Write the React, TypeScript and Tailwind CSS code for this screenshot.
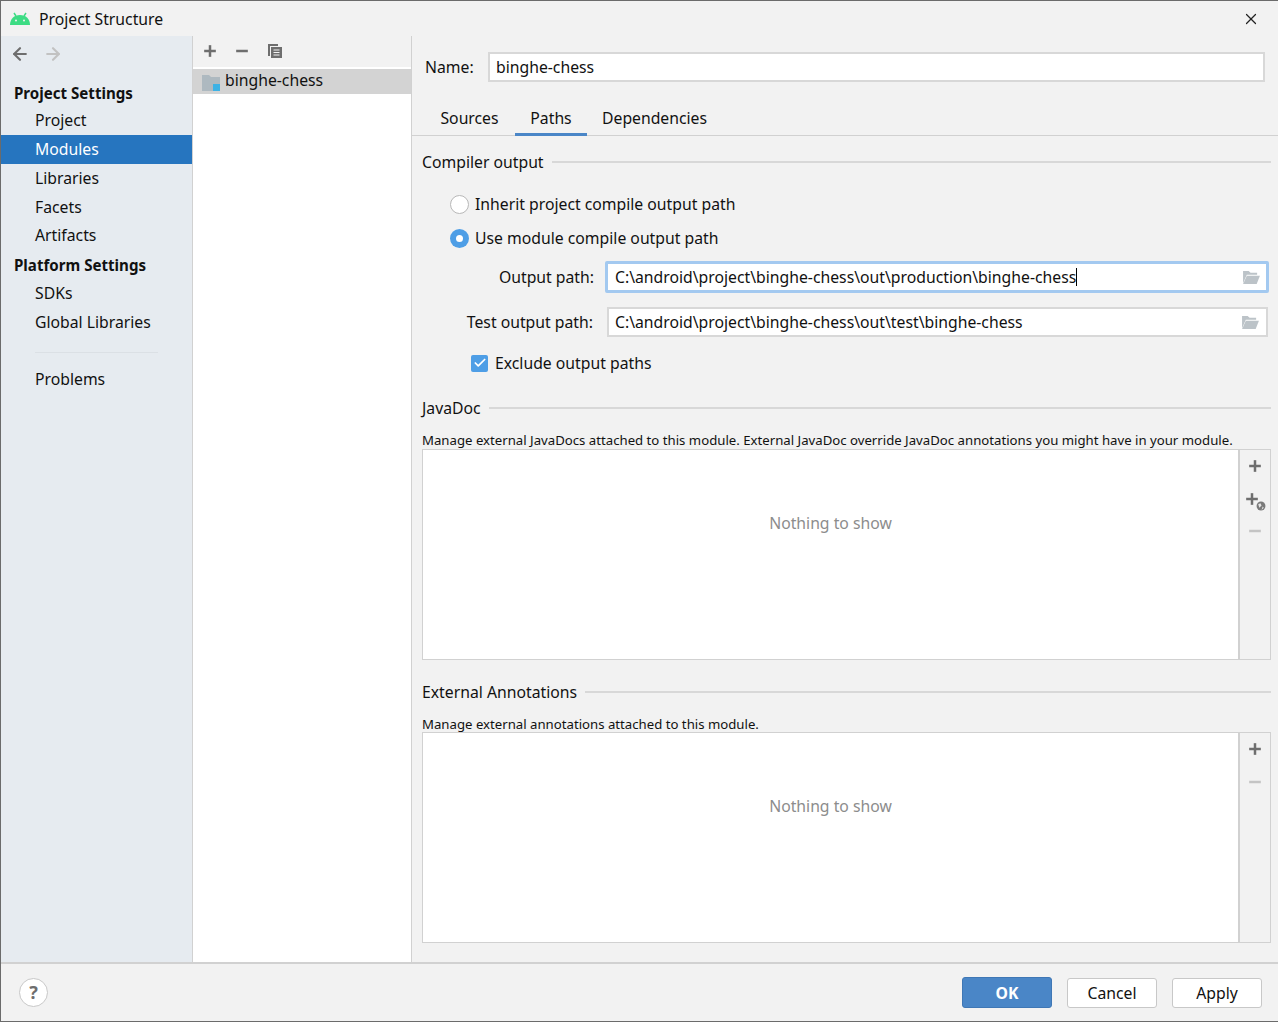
import { ArrowLeft, ArrowRight, Plus, Minus, X, Check } from "lucide-react";

const font = { fontFamily: '"Noto Sans", sans-serif' };

function FolderOpen() {
    return (
        <svg width="19" height="15" viewBox="0 0 20 16" className="shrink-0">
            <path d="M1 1h6l2 2h7v2H5L1 14z" fill="#bcc3c8" />
            <path d="M5 6h14l-3.500 9H1z" fill="#bcc3c8" />
        </svg>
    );
}

function SideItem({ label, active, bold, up }: { label: string; active?: boolean; bold?: boolean; up?: boolean }) {
    if (bold) {
        return <div className="h-[29px] pl-[13px] flex items-center font-bold text-[15.1px]">{label}</div>;
    }
    return (
        <div className={`h-[29px] pl-[34px] flex items-center ${active ? "bg-[#2675bf] text-white" : ""} ${up ? "pb-[2px]" : ""}`}>
            {label}
        </div>
    );
}

function SectionTitle({ label }: { label: string }) {
    return (
        <div className="flex items-center gap-2 h-[22px]">
            <span>{label}</span>
            <div className="flex-1 h-0.5 bg-[#d8d8d8]" />
        </div>
    );
}

function GlobeBadge() {
    return (
        <svg width="10" height="10" viewBox="0 0 9 9" className="absolute right-[-4px] bottom-[-2px]">
            <circle cx="4.500" cy="4.500" r="4" fill="#7a7a7a" />
            <path d="M2 3l2-1 1 2-2 2zM6 5l1 1-2 2z" fill="#e5e5e5" />
        </svg>
    );
}

function ListPanel({ withGlobe }: { withGlobe?: boolean }) {
    return (
        <div className="flex h-[211px] border border-[#d1d1d1]">
            <div className="flex-1 bg-white flex items-center justify-center">
                <span className="text-[#8c8c8c] mb-[62px]">Nothing to show</span>
            </div>
            <div className="w-[32px] border-l-2 border-[#d1d1d1] flex flex-col items-center pt-[6px] gap-[13px]">
                <Plus size={20} strokeWidth={3} strokeLinecap="butt" className="text-[#6e6e6e]" />
                {withGlobe && (
                    <div className="relative -translate-x-[3px] -mb-px">
                        <Plus size={20} strokeWidth={3} strokeLinecap="butt" className="text-[#6e6e6e]" />
                        <GlobeBadge />
                    </div>
                )}
                <Minus size={20} strokeWidth={3} strokeLinecap="butt" className="text-[#c4c4c4]" />
            </div>
        </div>
    );
}

export default function App() {
    return (
        <div className="w-[1278px] h-[1022px] flex flex-col overflow-hidden bg-[#f2f2f2] border border-[#6b6b6b] border-r-0 text-[15.75px] text-[#111]" style={font}>
            <div className="h-[35px] shrink-0 flex items-center pl-[9px] pr-[18px] leading-[23px]">
                <svg width="20" height="13" viewBox="0 0 20 13" className="mr-[9px]">
                    <path d="M0 13C0 7 4 3 10 3s10 4 10 10z" fill="#3ddc84" />
                    <path d="M4 1l2 3M16 1l-2 3" stroke="#3ddc84" strokeWidth="1.500" />
                    <circle cx="6" cy="8.500" r="1" fill="#f2f2f2" />
                    <circle cx="14" cy="8.500" r="1" fill="#f2f2f2" />
                </svg>
                <span className="pt-px">Project Structure</span>
                <X size={18} strokeWidth={1.6} className="ml-auto text-[#222]" />
            </div>

            <div className="flex-1 flex min-h-0">
                <div className="w-[192px] shrink-0 bg-[#e6ebf0] border-r border-[#d1d1d1]">
                    <div className="h-[43px] pl-[9px] pb-[8px] flex items-center gap-[13px]">
                        <ArrowLeft size={20} strokeWidth={2.6} className="text-[#6e6e6e]" />
                        <ArrowRight size={20} strokeWidth={2.6} className="text-[#c2c2c2]" />
                    </div>
                    <SideItem label="Project Settings" bold />
                    <div className="-mt-[2px]" />
                    <SideItem label="Project" />
                    <SideItem label="Modules" active />
                    <SideItem label="Libraries" />
                    <SideItem label="Facets" />
                    <SideItem label="Artifacts" up />
                    <SideItem label="Platform Settings" bold />
                    <SideItem label="SDKs" up />
                    <SideItem label="Global Libraries" up />
                    <div className="h-px bg-[#dbe0e5] mx-[34px] mt-[14px] mb-[13px]" />
                    <SideItem label="Problems" up />
                </div>

                <div className="w-[219px] shrink-0 bg-white border-r border-[#d1d1d1] flex flex-col">
                    <div className="h-[31px] bg-[#f2f2f2] flex items-center pl-[7px] gap-[12px] pb-[2px]">
                        <Plus size={20} strokeWidth={3} strokeLinecap="butt" className="text-[#6e6e6e]" />
                        <Minus size={20} strokeWidth={3} strokeLinecap="butt" className="text-[#6e6e6e]" />
                        <svg width="16" height="16" viewBox="0 0 16 16" className="ml-[3px]">
                            <path d="M1 1h10v2H3v10H1z" fill="#6e6e6e" />
                            <path d="M4 4h11v11H4z" fill="#6e6e6e" />
                            <path d="M6.500 7h6M6.500 9.500h6M6.500 12h6" stroke="#f2f2f2" />
                        </svg>
                    </div>
                    <div className="h-[2px]" />
                    <div className="h-[25px] bg-[#d3d3d3] flex items-center pl-[9px] gap-[5px] pb-[2px]">
                        <svg width="18" height="18" viewBox="0 0 18 18" className="mt-[2px]">
                            <path d="M0 2h7l2 2h9v14H0z" fill="#aeb9c0" />
                            <rect x="11" y="11" width="7" height="7" fill="#3db2e5" />
                        </svg>
                        <span>binghe-chess</span>
                    </div>
                </div>

                <div className="flex-1 min-w-0 flex flex-col leading-[23px]">
                    <div className="flex items-center pl-[13px] pr-[13px] pt-[16px]">
                        <span className="w-[63px]">Name:</span>
                        <div className="flex-1 h-[30px] bg-white border-2 border-[#d8d8d8] flex items-center pl-[6px]">binghe-chess</div>
                    </div>
                    <div className="flex mt-[21px] h-[33px] pl-[12px] border-b border-[#d1d1d1]">
                        <div className="w-[91px] flex items-center justify-center pb-[2px]">Sources</div>
                        <div className="w-[72px] h-[33px] flex items-center justify-center border-b-[3px] border-[#4a86c7]">Paths</div>
                        <div className="ml-[15px] flex items-center pb-[2px]">Dependencies</div>
                    </div>

                    <div className="pl-[10px] pr-[7px] pt-[15px]">
                        <SectionTitle label="Compiler output" />

                        <div className="mt-[19px] ml-[28px] flex items-center gap-[6px] h-[24px]">
                            <div className="w-[19px] h-[19px] rounded-full bg-white border border-[#b8b8b8]" />
                            <span>Inherit project compile output path</span>
                        </div>
                        <div className="mt-[10px] ml-[28px] flex items-center gap-[6px] h-[24px]">
                            <div className="w-[19px] h-[19px] rounded-full bg-[#4e9ee6] flex items-center justify-center">
                                <div className="w-[7px] h-[7px] rounded-full bg-white" />
                            </div>
                            <span>Use module compile output path</span>
                        </div>

                        <div className="mt-[11px] flex items-center h-[32px]">
                            <span className="w-[172px] text-right">Output path:</span>
                            <div className="ml-[11px] mr-[2px] flex-1 h-[32px] bg-white border-[3px] border-[#a3c9f0] rounded-[2px] flex items-center pl-[7px] pr-[5px]">
                                <span>C:\android\project\binghe-chess\out\production\binghe-chess</span>
                                <div className="w-px h-[18px] bg-black" />
                                <div className="ml-auto"><FolderOpen /></div>
                            </div>
                        </div>
                        <div className="mt-[14px] flex items-center h-[30px]">
                            <span className="w-[171px] text-right">Test output path:</span>
                            <div className="ml-[14px] mr-[3px] flex-1 h-[30px] bg-white border-2 border-[#d8d8d8] flex items-center pl-[6px] pr-[6px]">
                                <span>C:\android\project\binghe-chess\out\test\binghe-chess</span>
                                <div className="ml-auto"><FolderOpen /></div>
                            </div>
                        </div>

                        <div className="mt-[14px] ml-[49px] flex items-center gap-[7px] h-[24px]">
                            <div className="w-[17px] h-[17px] rounded-[2px] bg-[#4e9ee6] flex items-center justify-center">
                                <Check size={14} strokeWidth={3} className="text-white" />
                            </div>
                            <span>Exclude output paths</span>
                        </div>

                        <div className="mt-[22px]"><SectionTitle label="JavaDoc" /></div>
                        <div className="mt-[12px] h-[18px] text-[13.2px] whitespace-nowrap leading-[19px]">
                            Manage external JavaDocs attached to this module. External JavaDoc override JavaDoc annotations you might have in your module.
                        </div>
                        <ListPanel withGlobe />

                        <div className="mt-[21px]"><SectionTitle label="External Annotations" /></div>
                        <div className="mt-[13px] h-[16px] text-[13.2px] leading-[16px]">Manage external annotations attached to this module.</div>
                        <ListPanel />
                    </div>
                </div>
            </div>

            <div className="h-[59px] shrink-0 border-t-2 border-[#d1d1d1] flex items-center pl-[18px] pr-[16px] leading-[23px]">
                <div className="w-[29px] h-[29px] rounded-full bg-white border border-[#c8c8c8] flex items-center justify-center font-bold text-[#6e6e6e] text-[18px]">?</div>
                <button className="ml-auto w-[90px] h-[31px] pt-px rounded-[3px] bg-[#4a86c7] border border-[#3f77b5] text-white font-bold">OK</button>
                <button className="ml-[15px] w-[90px] h-[30px] pt-px rounded-[3px] bg-white border border-[#c8c8c8]">Cancel</button>
                <button className="ml-[15px] w-[90px] h-[30px] pt-px rounded-[3px] bg-white border border-[#c8c8c8]">Apply</button>
            </div>
        </div>
    );
}
